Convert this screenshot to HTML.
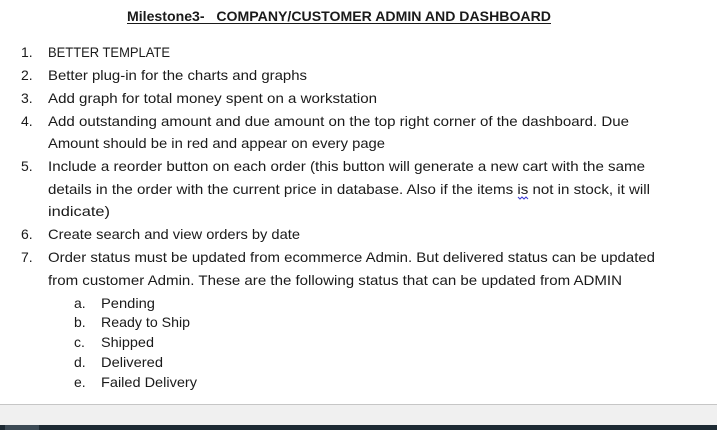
<!DOCTYPE html>
<html><head><meta charset="utf-8"><style>
html,body{margin:0;padding:0;width:717px;height:430px;overflow:hidden;background:#fff}
svg{display:block}
text{font-family:"Liberation Sans",sans-serif;font-size:14px;fill:#1a1a1a;white-space:pre}
</style></head><body>
<svg width="717" height="430" viewBox="0 0 717 430">
<rect x="0" y="0" width="717" height="404" fill="#fff"/>
<rect x="0" y="404" width="717" height="1" fill="#c6c6c6"/>
<rect x="0" y="405" width="717" height="20" fill="#f0f0f0"/>
<rect x="0" y="425" width="717" height="5" fill="#1d2a33"/>
<rect x="5" y="425" width="34" height="5" fill="#3c4a55"/>
<text x="127" y="21" textLength="424" lengthAdjust="spacingAndGlyphs" font-weight="bold">Milestone3-&#160;&#160;&#160;COMPANY/CUSTOMER ADMIN AND DASHBOARD</text>
<rect x="127" y="23" width="424" height="1" fill="#1a1a1a"/>
<g>
<text x="21" y="57">1.</text><text x="48" y="57" textLength="122" lengthAdjust="spacingAndGlyphs">BETTER TEMPLATE</text>
<text x="21" y="80">2.</text><text x="48" y="80" textLength="259" lengthAdjust="spacingAndGlyphs">Better plug-in for the charts and graphs</text>
<text x="21" y="103">3.</text><text x="48" y="103" textLength="329" lengthAdjust="spacingAndGlyphs">Add graph for total money spent on a workstation</text>
<text x="21" y="126">4.</text><text x="48" y="126" textLength="581" lengthAdjust="spacingAndGlyphs">Add outstanding amount and due amount on the top right corner of the dashboard. Due</text>
<text x="48" y="148" textLength="337" lengthAdjust="spacingAndGlyphs">Amount should be in red and appear on every page</text>
<text x="21" y="171">5.</text><text x="48" y="171" textLength="597" lengthAdjust="spacingAndGlyphs">Include a reorder button on each order (this button will generate a new cart with the same</text>
<text x="48" y="194" textLength="602" lengthAdjust="spacingAndGlyphs">details in the order with the current price in database. Also if the items is not in stock, it will</text>
<path d="M518 197 l2 2 l2 -2 l2 2 l2 -2 l2 2" stroke="#3b3bd6" stroke-width="1" fill="none"/>
<text x="48" y="216" textLength="62" lengthAdjust="spacingAndGlyphs">indicate)</text>
<text x="21" y="239">6.</text><text x="48" y="239" textLength="252" lengthAdjust="spacingAndGlyphs">Create search and view orders by date</text>
<text x="21" y="262">7.</text><text x="48" y="262" textLength="607" lengthAdjust="spacingAndGlyphs">Order status must be updated from ecommerce Admin. But delivered status can be updated</text>
<text x="48" y="285" textLength="574" lengthAdjust="spacingAndGlyphs">from customer Admin. These are the following status that can be updated from ADMIN</text>
<text x="74" y="308">a.</text><text x="101" y="308" textLength="54" lengthAdjust="spacingAndGlyphs">Pending</text>
<text x="74" y="327">b.</text><text x="101" y="327" textLength="89" lengthAdjust="spacingAndGlyphs">Ready to Ship</text>
<text x="74" y="347">c.</text><text x="101" y="347" textLength="53" lengthAdjust="spacingAndGlyphs">Shipped</text>
<text x="74" y="367">d.</text><text x="101" y="367" textLength="62" lengthAdjust="spacingAndGlyphs">Delivered</text>
<text x="74" y="387">e.</text><text x="101" y="387" textLength="96" lengthAdjust="spacingAndGlyphs">Failed Delivery</text>
</g>
</svg>
</body></html>
